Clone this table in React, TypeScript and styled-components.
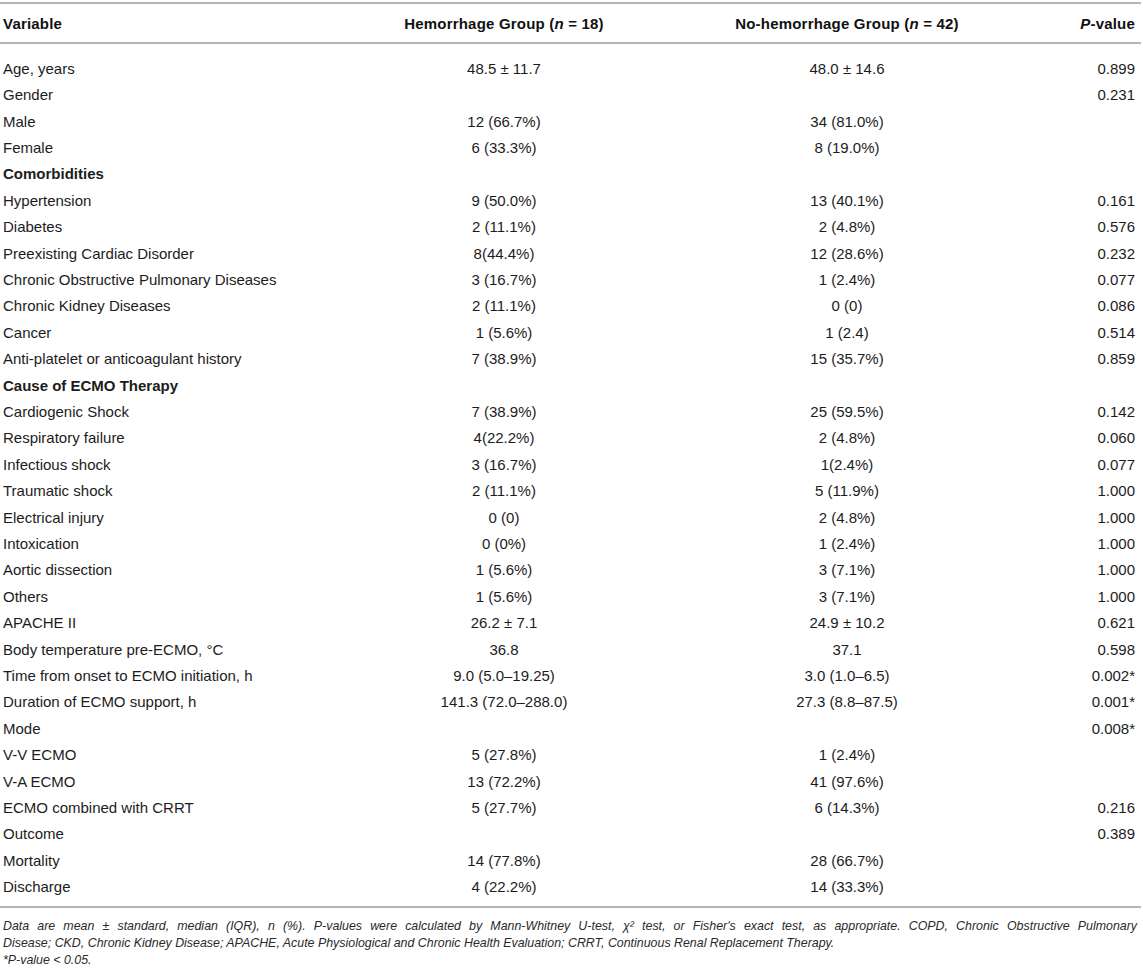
import React from "react";
import styled, { createGlobalStyle } from "styled-components";

const Global = createGlobalStyle`
  html, body { margin: 0; padding: 0; background: #ffffff; }
  body { font-family: "Liberation Sans", Arial, Helvetica, sans-serif; color: #1c1c1c; }
`;

const COLS = "350px 308px 378px 105px";

const Page = styled.div`
  width: 1141px;
  padding-top: 2px;
`;

const HeaderRow = styled.div`
  display: grid;
  grid-template-columns: ${COLS};
  height: 38px;
  align-items: center;
  border-top: 2px solid #b4b4b4;
  border-bottom: 2px solid #b4b4b4;
  font-size: 15px;
  color: #111;
`;

const Body = styled.div`
  padding: 11px 0 6px;
  border-bottom: 2px solid #b4b4b4;
`;

const Row = styled.div`
  display: grid;
  grid-template-columns: ${COLS};
  height: 26.42px;
  align-items: center;
  font-size: 15px;
`;

const Cell = styled.div<{ $align?: "left" | "center" | "right"; $bold?: boolean }>`
  text-align: ${(p) => p.$align || "left"};
  font-weight: ${(p) => (p.$bold ? 700 : 400)};
  padding: ${(p) => (p.$align === "right" ? "0 6px 0 0" : p.$align === "center" ? "0" : "0 0 0 3px")};
  white-space: nowrap;
`;

const HeadCell = styled(Cell).attrs({ $bold: true })`
  letter-spacing: 0.2px;
`;

const Notes = styled.div`
  padding-top: 10px;
  padding-left: 3px;
  padding-right: 4px;
  font-size: 12.4px;
  line-height: 17px;
  font-style: italic;
  color: #2a2a2a;
`;

const NoteLine = styled.div<{ $justify?: boolean }>`
  white-space: nowrap;
  text-align: ${(p) => (p.$justify ? "justify" : "left")};
  text-align-last: ${(p) => (p.$justify ? "justify" : "left")};
`;

type R = [string, string, string, string, boolean?];

const rows: R[] = [
  ["Age, years", "48.5 ± 11.7", "48.0 ± 14.6", "0.899"],
  ["Gender", "", "", "0.231"],
  ["Male", "12 (66.7%)", "34 (81.0%)", ""],
  ["Female", "6 (33.3%)", "8 (19.0%)", ""],
  ["Comorbidities", "", "", "", true],
  ["Hypertension", "9 (50.0%)", "13 (40.1%)", "0.161"],
  ["Diabetes", "2 (11.1%)", "2 (4.8%)", "0.576"],
  ["Preexisting Cardiac Disorder", "8(44.4%)", "12 (28.6%)", "0.232"],
  ["Chronic Obstructive Pulmonary Diseases", "3 (16.7%)", "1 (2.4%)", "0.077"],
  ["Chronic Kidney Diseases", "2 (11.1%)", "0 (0)", "0.086"],
  ["Cancer", "1 (5.6%)", "1 (2.4)", "0.514"],
  ["Anti-platelet or anticoagulant history", "7 (38.9%)", "15 (35.7%)", "0.859"],
  ["Cause of ECMO Therapy", "", "", "", true],
  ["Cardiogenic Shock", "7 (38.9%)", "25 (59.5%)", "0.142"],
  ["Respiratory failure", "4(22.2%)", "2 (4.8%)", "0.060"],
  ["Infectious shock", "3 (16.7%)", "1(2.4%)", "0.077"],
  ["Traumatic shock", "2 (11.1%)", "5 (11.9%)", "1.000"],
  ["Electrical injury", "0 (0)", "2 (4.8%)", "1.000"],
  ["Intoxication", "0 (0%)", "1 (2.4%)", "1.000"],
  ["Aortic dissection", "1 (5.6%)", "3 (7.1%)", "1.000"],
  ["Others", "1 (5.6%)", "3 (7.1%)", "1.000"],
  ["APACHE II", "26.2 ± 7.1", "24.9 ± 10.2", "0.621"],
  ["Body temperature pre-ECMO, °C", "36.8", "37.1", "0.598"],
  ["Time from onset to ECMO initiation, h", "9.0 (5.0–19.25)", "3.0 (1.0–6.5)", "0.002*"],
  ["Duration of ECMO support, h", "141.3 (72.0–288.0)", "27.3 (8.8–87.5)", "0.001*"],
  ["Mode", "", "", "0.008*"],
  ["V-V ECMO", "5 (27.8%)", "1 (2.4%)", ""],
  ["V-A ECMO", "13 (72.2%)", "41 (97.6%)", ""],
  ["ECMO combined with CRRT", "5 (27.7%)", "6 (14.3%)", "0.216"],
  ["Outcome", "", "", "0.389"],
  ["Mortality", "14 (77.8%)", "28 (66.7%)", ""],
  ["Discharge", "4 (22.2%)", "14 (33.3%)", ""],
];

export default function App() {
  return (
    <Page>
      <Global />
      <HeaderRow>
        <HeadCell>Variable</HeadCell>
        <HeadCell $align="center">
          Hemorrhage Group (<i>n</i> = 18)
        </HeadCell>
        <HeadCell $align="center">
          No-hemorrhage Group (<i>n</i> = 42)
        </HeadCell>
        <HeadCell $align="right">
          <i>P</i>-value
        </HeadCell>
      </HeaderRow>
      <Body>
        {rows.map((r, i) => (
          <Row key={i}>
            <Cell $bold={r[4]}>{r[0]}</Cell>
            <Cell $align="center">{r[1]}</Cell>
            <Cell $align="center">{r[2]}</Cell>
            <Cell $align="right">{r[3]}</Cell>
          </Row>
        ))}
      </Body>
      <Notes>
        <NoteLine $justify>
          Data are mean ± standard, median (IQR), n (%). P-values were calculated by Mann-Whitney U-test, χ² test, or Fisher's exact test, as appropriate. COPD, Chronic Obstructive Pulmonary
        </NoteLine>
        <NoteLine>
          Disease; CKD, Chronic Kidney Disease; APACHE, Acute Physiological and Chronic Health Evaluation; CRRT, Continuous Renal Replacement Therapy.
        </NoteLine>
        <NoteLine>*P-value &lt; 0.05.</NoteLine>
      </Notes>
    </Page>
  );
}
